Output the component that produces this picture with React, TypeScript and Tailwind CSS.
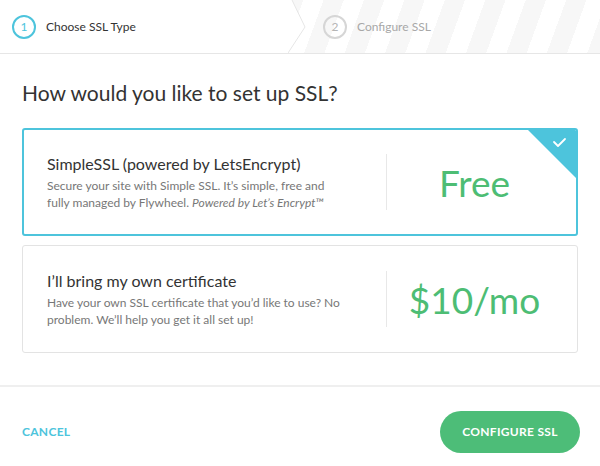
import React from "react";

const Step = ({ num, label, active }: { num: number; label: string; active?: boolean }) => (
  <div className="flex items-center gap-[10px]">
    <div
      className={
        active
          ? "flex h-[24px] w-[24px] items-center justify-center rounded-full border-2 border-[#4dc4dc] text-[12px] text-[#4dc4dc]"
          : "flex h-[24px] w-[24px] items-center justify-center rounded-full border-2 border-[#d6d6d6] text-[12px] text-[#b5b5b5]"
      }
    >
      {num}
    </div>
    <span className={active ? "text-[12px] text-[#333]" : "text-[12px] text-[#a8a8a8]"}>{label}</span>
  </div>
);

const Option = ({
  title,
  children,
  price,
  selected,
}: {
  title: string;
  children: React.ReactNode;
  price: string;
  selected?: boolean;
}) => (
  <div
    className={
      selected
        ? "relative flex h-[108px] items-center overflow-hidden rounded-[3px] border-2 border-[#4dc4dc] pl-[23px] pr-[14px]"
        : "relative flex h-[108px] items-center overflow-hidden rounded-[3px] border border-[#e3e3e3] pl-[24px] pr-[15px]"
    }
  >
    <div className="w-[339px]">
      <div className="text-[16px] leading-[20px] text-[#333]">{title}</div>
      <p className="mt-[3px] w-[300px] text-[12px] leading-[17px] text-[#777]">{children}</p>
    </div>
    <div className="h-[56px] w-px bg-[#e8e8e8]" />
    <div className="flex-1 text-center text-[37px] leading-none text-[#4dbd74]">{price}</div>
    {selected && (
      <svg className="absolute right-0 top-0" width="48" height="48" viewBox="0 0 48 48">
        <polygon points="0,0 48,0 48,48" fill="#4dc4dc" />
        <polyline points="26,12 30,16 37,9" fill="none" stroke="#fff" strokeWidth="1.8" strokeLinecap="round" strokeLinejoin="round" />
      </svg>
    )}
  </div>
);

export default function App() {
  return (
    <div className="h-[466px] w-[600px] bg-white font-['Lato',sans-serif]">
      {/* steps header */}
      <div className="flex h-[54px] border-b border-[#e6e6e6] bg-[repeating-linear-gradient(110deg,#f7f7f7_0,#f7f7f7_19px,#ffffff_19px,#ffffff_38px)]">
        <div className="flex w-[288px] items-center bg-white pl-[12px] pt-[1px]">
          <Step num={1} label="Choose SSL Type" active />
        </div>
        <svg width="18" height="53" viewBox="0 0 18 53" className="shrink-0">
          <polygon points="0,0 4,0 17,27 0,53" fill="#fff" />
          <polyline points="4,0 17,27 0,53" fill="none" stroke="#e6e6e6" strokeWidth="1" />
        </svg>
        <div className="flex items-center pl-[17px] pt-[1px]">
          <Step num={2} label="Configure SSL" />
        </div>
      </div>

      <div className="px-[22px]">
        <h1 className="pt-[25px] text-[21px] leading-[27px] text-[#333]">How would you like to set up SSL?</h1>
        <div className="mt-[22px] flex flex-col gap-[9px]">
          <Option title="SimpleSSL (powered by LetsEncrypt)" price="Free" selected>
            Secure your site with Simple SSL. It’s simple, free and fully managed by Flywheel.{" "}
            <em>Powered by Let’s Encrypt™</em>
          </Option>
          <Option title="I’ll bring my own certificate" price="$10/mo">
            Have your own SSL certificate that you’d like to use? No problem. We’ll help you get it all set up!
          </Option>
        </div>
      </div>

      <div className="mt-[32px] h-[2px] bg-[#efefef]" />

      <div className="flex items-center justify-between px-[20px] pt-[24px]">
        <button className="pl-[2px] text-[12px] font-bold tracking-[0.3px] text-[#4dc4dc]">CANCEL</button>
        <button className="h-[42px] w-[140px] rounded-full bg-[#4dbd78] text-[12px] font-bold tracking-[0.3px] text-white">
          CONFIGURE SSL
        </button>
      </div>
    </div>
  );
}
